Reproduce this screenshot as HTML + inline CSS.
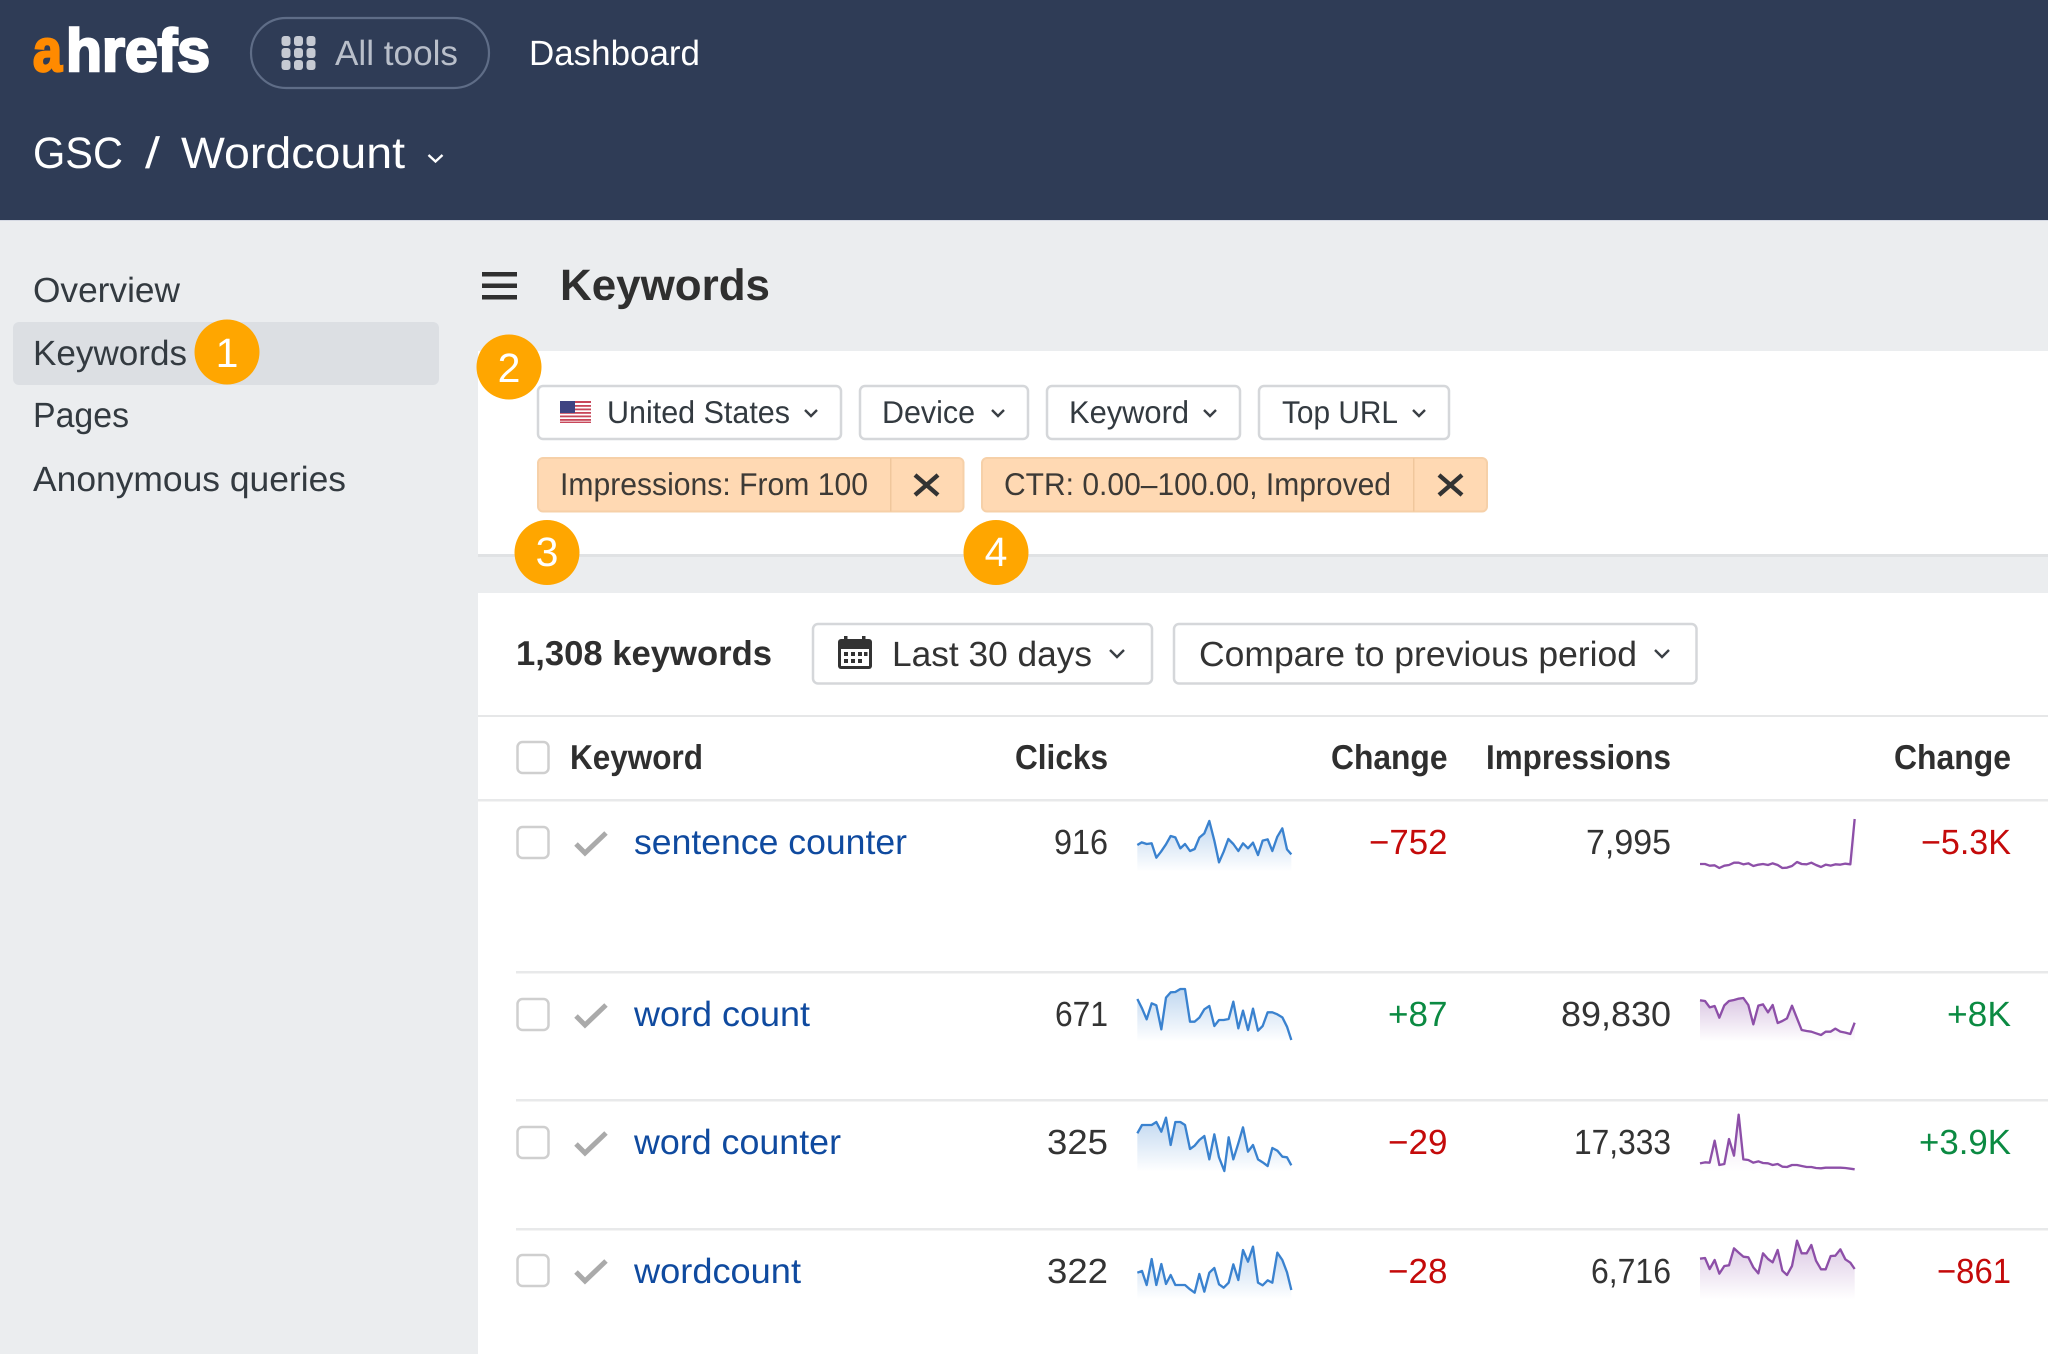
<!DOCTYPE html>
<html lang="en">
<head>
<meta charset="utf-8">
<title>Ahrefs GSC Keywords</title>
<style>
html,body{margin:0;padding:0;width:2048px;height:1354px;overflow:hidden;background:#ebedef}
svg{display:block}
text{font-family:"Liberation Sans",Arial,sans-serif;text-rendering:geometricPrecision;white-space:pre}
.s{font-size:35px;fill:#333a40}
.f{font-size:31.5px;fill:#333a40}
.p{font-size:31.5px;fill:#3d3a36}
.t{font-size:35px;fill:#333}
.b{font-size:34.5px;font-weight:700;fill:#2f2f2f}
.l{font-size:35px;fill:#0f4a9f}
.r{font-size:35px;fill:#c40a0a}
.g{font-size:35px;fill:#0b8a42}
.n{font-size:41px;fill:#fff;text-anchor:middle}
.chev{fill:none;stroke:#3a3f45;stroke-width:2.4}
.box{fill:#fff;stroke:#cfcfcf;stroke-width:2.5}
.tick{fill:none;stroke:#aaa;stroke-width:5}
.lnb{fill:none;stroke:#3a82cf;stroke-width:7;stroke-linejoin:round}
.lnp{fill:none;stroke:#8d4fa8;stroke-width:7;stroke-linejoin:round}
.btn{fill:#fff;stroke:#d5d7da;stroke-width:2.5}
</style>
</head>
<body>
<svg width="2048" height="1354" viewBox="0 0 2048 1354" xmlns="http://www.w3.org/2000/svg">
<defs>
<linearGradient id="gb" x1="0" y1="0" x2="0" y2="1"><stop offset="0" stop-color="#3a82cf" stop-opacity=".32"/><stop offset="1" stop-color="#3a82cf" stop-opacity="0"/></linearGradient>
<linearGradient id="gp" x1="0" y1="0" x2="0" y2="1"><stop offset="0" stop-color="#8d4fa8" stop-opacity=".32"/><stop offset="1" stop-color="#8d4fa8" stop-opacity="0"/></linearGradient>
</defs>

<!-- Header -->
<rect x="0" y="0" width="2048" height="220" fill="#2f3c56"/>
<rect x="0" y="220" width="2048" height="1" fill="#d5d9e3"/>
<text x="33" y="71" font-size="60" font-weight="700" fill="#ff8a00" stroke="#ff8a00" stroke-width="2.5" textLength="29" lengthAdjust="spacingAndGlyphs">a</text>
<text x="66" y="71" font-size="60" font-weight="700" fill="#fff" stroke="#fff" stroke-width="2.5" textLength="144" lengthAdjust="spacingAndGlyphs">hrefs</text>

<rect x="251" y="18" width="238" height="70" rx="35" fill="none" stroke="#5f6d87" stroke-width="2.2"/>
<g fill="#c6cad3">
<rect x="281.5" y="36" width="9" height="10" rx="3"/><rect x="294" y="36" width="9" height="10" rx="3"/><rect x="306.5" y="36" width="9" height="10" rx="3"/>
<rect x="281.5" y="48" width="9" height="10" rx="3"/><rect x="294" y="48" width="9" height="10" rx="3"/><rect x="306.5" y="48" width="9" height="10" rx="3"/>
<rect x="281.5" y="60" width="9" height="10" rx="3"/><rect x="294" y="60" width="9" height="10" rx="3"/><rect x="306.5" y="60" width="9" height="10" rx="3"/>
</g>
<text x="335" y="65" font-size="35" fill="#b9bfca" textLength="123" lengthAdjust="spacingAndGlyphs">All tools</text>
<text x="529" y="65" font-size="35" fill="#fff" textLength="171" lengthAdjust="spacingAndGlyphs">Dashboard</text>

<text x="33" y="168" font-size="44" fill="#fff" textLength="90" lengthAdjust="spacingAndGlyphs">GSC</text>
<text x="145" y="168" font-size="44" fill="#fff" textLength="15" lengthAdjust="spacingAndGlyphs">/</text>
<text x="181" y="168" font-size="44" fill="#fff" textLength="224" lengthAdjust="spacingAndGlyphs">Wordcount</text>
<polyline points="428.5,155 435.5,161.5 442.5,155" fill="none" stroke="#fff" stroke-width="2.4"/>

<!-- Sidebar -->
<rect x="13" y="322" width="426" height="63" rx="6" fill="#dcdfe3"/>
<text class="s" x="33" y="302" textLength="147" lengthAdjust="spacingAndGlyphs">Overview</text>
<text class="s" x="33" y="365" textLength="154" lengthAdjust="spacingAndGlyphs">Keywords</text>
<text class="s" x="33" y="427" textLength="96" lengthAdjust="spacingAndGlyphs">Pages</text>
<text class="s" x="33" y="491" textLength="313" lengthAdjust="spacingAndGlyphs">Anonymous queries</text>

<!-- Main title -->
<g fill="#2f2f2f">
<rect x="482" y="272" width="35" height="4.5"/><rect x="482" y="283.5" width="35" height="4.5"/><rect x="482" y="295" width="35" height="4.5"/>
</g>
<text x="560" y="300" font-size="44" font-weight="700" fill="#2f2f2f" textLength="210" lengthAdjust="spacingAndGlyphs">Keywords</text>

<!-- Filter panel -->
<rect x="478" y="351" width="1570" height="203" fill="#fff"/>
<rect x="478" y="554" width="1570" height="3" fill="#e0e2e4"/>

<rect class="btn" x="538" y="386" width="303" height="53" rx="5"/>
<rect class="btn" x="860" y="386" width="168" height="53" rx="5"/>
<rect class="btn" x="1047" y="386" width="193" height="53" rx="5"/>
<rect class="btn" x="1259" y="386" width="190" height="53" rx="5"/>

<!-- flag -->
<g>
<rect x="560" y="401" width="31" height="22" fill="#fff"/>
<g fill="#c8475a">
<rect x="560" y="401" width="31" height="2"/><rect x="560" y="405" width="31" height="1.8"/><rect x="560" y="408.5" width="31" height="1.8"/><rect x="560" y="412" width="31" height="1.8"/><rect x="560" y="415.5" width="31" height="1.8"/><rect x="560" y="419" width="31" height="1.8"/><rect x="560" y="421.6" width="31" height="1.4"/>
</g>
<rect x="560" y="401" width="15" height="12" fill="#3f4482"/>
</g>
<text class="f" x="607" y="423" textLength="183" lengthAdjust="spacingAndGlyphs">United States</text>
<polyline class="chev" points="805,410 811,416 817,410"/>
<text class="f" x="882" y="423" textLength="93" lengthAdjust="spacingAndGlyphs">Device</text>
<polyline class="chev" points="992,410 998,416 1004,410"/>
<text class="f" x="1069" y="423" textLength="120" lengthAdjust="spacingAndGlyphs">Keyword</text>
<polyline class="chev" points="1204,410 1210,416 1216,410"/>
<text class="f" x="1282" y="423" textLength="116" lengthAdjust="spacingAndGlyphs">Top URL</text>
<polyline class="chev" points="1413,410 1419,416 1425,410"/>

<!-- Pills -->
<rect x="538" y="458" width="425.5" height="53.5" rx="5" fill="#ffd9b3" stroke="#f6d0a8" stroke-width="2"/>
<rect x="890" y="458" width="1.5" height="53.5" fill="#f0c79c"/>
<text class="p" x="560" y="495" textLength="308" lengthAdjust="spacingAndGlyphs">Impressions: From 100</text>
<path d="M915 475L938 495M938 475L915 495" stroke="#333" stroke-width="4.4" fill="none"/>
<rect x="982" y="458" width="505" height="53.5" rx="5" fill="#ffd9b3" stroke="#f6d0a8" stroke-width="2"/>
<rect x="1413" y="458" width="1.5" height="53.5" fill="#f0c79c"/>
<text class="p" x="1004" y="495" textLength="387" lengthAdjust="spacingAndGlyphs">CTR: 0.00–100.00, Improved</text>
<path d="M1439 475L1462 495M1462 475L1439 495" stroke="#333" stroke-width="4.4" fill="none"/>

<!-- Table panel -->
<rect x="478" y="593" width="1570" height="761" fill="#fff"/>
<text class="b" x="516" y="665" textLength="256" lengthAdjust="spacingAndGlyphs">1,308 keywords</text>

<rect class="btn" x="813" y="624" width="339" height="59.5" rx="5"/>
<g>
<rect x="838" y="639" width="34" height="30" rx="3" fill="#333"/>
<rect x="844" y="636" width="3.5" height="6" fill="#333"/><rect x="862" y="636" width="3.5" height="6" fill="#333"/>
<rect x="841" y="649" width="28" height="17" fill="#fff"/>
<g fill="#333">
<rect x="844" y="652" width="4" height="4"/><rect x="851" y="652" width="4" height="4"/><rect x="858" y="652" width="4" height="4"/><rect x="864" y="652" width="3.5" height="4"/>
<rect x="844" y="659" width="4" height="4"/><rect x="851" y="659" width="4" height="4"/><rect x="858" y="659" width="4" height="4"/>
</g>
</g>
<text class="t" x="892" y="666" textLength="200" lengthAdjust="spacingAndGlyphs">Last 30 days</text>
<polyline class="chev" points="1110,650 1117,657 1124,650"/>

<rect class="btn" x="1174" y="624" width="522.5" height="59.5" rx="5"/>
<text class="t" x="1199" y="666" textLength="438" lengthAdjust="spacingAndGlyphs">Compare to previous period</text>
<polyline class="chev" points="1655,650 1662,657 1669,650"/>

<rect x="478" y="715" width="1570" height="2" fill="#e6e7e8"/>
<rect x="478" y="799" width="1570" height="2.5" fill="#e8e9ea"/>
<rect x="516" y="971" width="1532" height="2.5" fill="#e8e9ea"/>
<rect x="516" y="1099" width="1532" height="2.5" fill="#e8e9ea"/>
<rect x="516" y="1228" width="1532" height="2.5" fill="#e8e9ea"/>

<!-- Table header -->
<rect class="box" x="517.5" y="742" width="31" height="31" rx="5"/>
<text class="b" x="570" y="769" textLength="133" lengthAdjust="spacingAndGlyphs">Keyword</text>
<text class="b" x="1015" y="769" textLength="93" lengthAdjust="spacingAndGlyphs">Clicks</text>
<text class="b" x="1331" y="769" textLength="116.500" lengthAdjust="spacingAndGlyphs">Change</text>
<text class="b" x="1486" y="769" textLength="185" lengthAdjust="spacingAndGlyphs">Impressions</text>
<text class="b" x="1894" y="769" textLength="117" lengthAdjust="spacingAndGlyphs">Change</text>

<!-- Row 1 -->
<rect class="box" x="517.5" y="827" width="31" height="31" rx="5"/>
<polyline class="tick" points="576,844 585,853 606,833"/>
<text class="l" x="634" y="854" textLength="273" lengthAdjust="spacingAndGlyphs">sentence counter</text>
<text class="t" x="1054" y="854" textLength="54" lengthAdjust="spacingAndGlyphs">916</text>
<text class="r" x="1369" y="854" textLength="78.500" lengthAdjust="spacingAndGlyphs">−752</text>
<text class="t" x="1586" y="854" textLength="85" lengthAdjust="spacingAndGlyphs">7,995</text>
<text class="r" x="1921" y="854" textLength="90" lengthAdjust="spacingAndGlyphs">−5.3K</text>
<g transform="translate(1120,800) scale(.33333)">
<polygon fill="url(#gb)" points="52,135 65,127 80,132 95,130 109,173 123,155 138,133 152,108 166,112 181,145 195,132 210,153 224,147 238,113 253,100 268,63 283,122 297,187 311,155 325,117 340,132 355,153 369,130 384,145 399,128 414,165 428,122 443,118 457,153 472,110 487,85 501,148 514,163 514,215 52,215"/>
<polyline class="lnb" points="52,135 65,127 80,132 95,130 109,173 123,155 138,133 152,108 166,112 181,145 195,132 210,153 224,147 238,113 253,100 268,63 283,122 297,187 311,155 325,117 340,132 355,153 369,130 384,145 399,128 414,165 428,122 443,118 457,153 472,110 487,85 501,148 514,163"/>
</g>
<g transform="translate(1680,800) scale(.33333)">
<polygon fill="url(#gp)" opacity=".4" points="60,192 75,192 89,197 104,196 118,204 133,197 147,195 162,188 176,188 190,193 205,190 220,198 235,194 249,192 264,195 278,190 293,195 307,204 321,203 336,198 351,186 365,192 380,193 394,188 408,195 423,201 437,194 452,197 466,193 481,194 496,191 511,193 524,57 524,215 60,215"/>
<polyline class="lnp" points="60,192 75,192 89,197 104,196 118,204 133,197 147,195 162,188 176,188 190,193 205,190 220,198 235,194 249,192 264,195 278,190 293,195 307,204 321,203 336,198 351,186 365,192 380,193 394,188 408,195 423,201 437,194 452,197 466,193 481,194 496,191 511,193 524,57"/>
</g>

<!-- Row 2 -->
<rect class="box" x="517.5" y="999" width="31" height="31" rx="5"/>
<polyline class="tick" points="576,1016 585,1025 606,1005"/>
<text class="l" x="634" y="1026" textLength="176" lengthAdjust="spacingAndGlyphs">word count</text>
<text class="t" x="1055" y="1026" textLength="53" lengthAdjust="spacingAndGlyphs">671</text>
<text class="g" x="1388" y="1026" textLength="59.500" lengthAdjust="spacingAndGlyphs">+87</text>
<text class="t" x="1561" y="1026" textLength="110" lengthAdjust="spacingAndGlyphs">89,830</text>
<text class="g" x="1947" y="1026" textLength="64" lengthAdjust="spacingAndGlyphs">+8K</text>
<g transform="translate(1120,970) scale(.33333)">
<polygon fill="url(#gb)" points="52,87 66,115 80,148 95,100 109,106 124,178 138,83 152,67 166,66 181,57 195,57 210,155 224,155 238,143 253,118 268,108 283,168 297,150 311,150 326,147 340,95 355,175 369,122 384,180 399,116 414,182 428,168 443,127 457,127 472,133 487,142 501,170 514,210 514,215 52,215"/>
<polyline class="lnb" points="52,87 66,115 80,148 95,100 109,106 124,178 138,83 152,67 166,66 181,57 195,57 210,155 224,155 238,143 253,118 268,108 283,168 297,150 311,150 326,147 340,95 355,175 369,122 384,180 399,116 414,182 428,168 443,127 457,127 472,133 487,142 501,170 514,210"/>
</g>
<g transform="translate(1680,970) scale(.33333)">
<polygon fill="url(#gp)" points="60,91 75,93 89,112 104,108 118,143 133,106 147,93 162,90 176,86 190,84 205,105 220,163 235,107 249,103 264,127 278,105 293,159 307,153 321,145 336,107 351,145 365,180 380,183 394,185 408,190 423,195 437,185 452,185 466,176 481,185 496,188 511,192 524,158 524,215 60,215"/>
<polyline class="lnp" points="60,91 75,93 89,112 104,108 118,143 133,106 147,93 162,90 176,86 190,84 205,105 220,163 235,107 249,103 264,127 278,105 293,159 307,153 321,145 336,107 351,145 365,180 380,183 394,185 408,190 423,195 437,185 452,185 466,176 481,185 496,188 511,192 524,158"/>
</g>

<!-- Row 3 -->
<rect class="box" x="517.5" y="1127" width="31" height="31" rx="5"/>
<polyline class="tick" points="576,1144 585,1153 606,1133"/>
<text class="l" x="634" y="1154" textLength="207" lengthAdjust="spacingAndGlyphs">word counter</text>
<text class="t" x="1047" y="1154" textLength="61" lengthAdjust="spacingAndGlyphs">325</text>
<text class="r" x="1388" y="1154" textLength="59.500" lengthAdjust="spacingAndGlyphs">−29</text>
<text class="t" x="1574" y="1154" textLength="97" lengthAdjust="spacingAndGlyphs">17,333</text>
<text class="g" x="1919" y="1154" textLength="92" lengthAdjust="spacingAndGlyphs">+3.9K</text>
<g transform="translate(1120,1100) scale(.33333)">
<polygon fill="url(#gb)" points="52,100 66,75 80,75 95,75 109,66 124,95 138,53 152,135 166,66 181,66 195,75 210,147 224,137 238,120 253,108 268,178 283,103 297,172 313,213 326,112 340,178 355,130 369,82 384,155 399,135 414,178 428,187 443,198 457,144 472,152 487,170 501,172 514,196 514,215 52,215"/>
<polyline class="lnb" points="52,100 66,75 80,75 95,75 109,66 124,95 138,53 152,135 166,66 181,66 195,75 210,147 224,137 238,120 253,108 268,178 283,103 297,172 313,213 326,112 340,178 355,130 369,82 384,155 399,135 414,178 428,187 443,198 457,144 472,152 487,170 501,172 514,196"/>
</g>
<g transform="translate(1680,1100) scale(.33333)">
<polygon fill="url(#gp)" opacity=".6" points="60,190 75,187 89,188 104,122 118,195 133,192 147,117 162,167 176,44 190,178 205,180 220,188 235,184 249,189 264,190 278,195 293,192 307,200 321,201 336,195 351,195 365,198 380,201 394,201 408,204 423,205 437,203 452,203 466,203 481,203 496,204 511,206 524,208 524,215 60,215"/>
<polyline class="lnp" points="60,190 75,187 89,188 104,122 118,195 133,192 147,117 162,167 176,44 190,178 205,180 220,188 235,184 249,189 264,190 278,195 293,192 307,200 321,201 336,195 351,195 365,198 380,201 394,201 408,204 423,205 437,203 452,203 466,203 481,203 496,204 511,206 524,208"/>
</g>

<!-- Row 4 -->
<rect class="box" x="517.5" y="1255" width="31" height="31" rx="5"/>
<polyline class="tick" points="576,1272 585,1281 606,1261"/>
<text class="l" x="634" y="1283" textLength="167" lengthAdjust="spacingAndGlyphs">wordcount</text>
<text class="t" x="1047" y="1283" textLength="61" lengthAdjust="spacingAndGlyphs">322</text>
<text class="r" x="1388" y="1283" textLength="59.500" lengthAdjust="spacingAndGlyphs">−28</text>
<text class="t" x="1591" y="1283" textLength="80" lengthAdjust="spacingAndGlyphs">6,716</text>
<text class="r" x="1937" y="1283" textLength="74" lengthAdjust="spacingAndGlyphs">−861</text>
<g transform="translate(1120,1230) scale(.33333)">
<polygon fill="url(#gb)" points="52,128 66,123 80,165 95,87 109,165 124,102 138,162 152,135 166,165 181,165 195,165 210,178 224,188 238,132 253,185 268,128 283,114 297,163 311,173 326,158 340,103 355,150 369,60 384,95 399,50 414,158 428,166 443,151 457,158 472,68 487,90 501,127 514,180 514,208 52,208"/>
<polyline class="lnb" points="52,128 66,123 80,165 95,87 109,165 124,102 138,162 152,135 166,165 181,165 195,165 210,178 224,188 238,132 253,185 268,128 283,114 297,163 311,173 326,158 340,103 355,150 369,60 384,95 399,50 414,158 428,166 443,151 457,158 472,68 487,90 501,127 514,180"/>
</g>
<g transform="translate(1680,1230) scale(.33333)">
<polygon fill="url(#gp)" points="60,86 75,84 89,117 104,90 118,131 133,108 147,106 162,55 176,68 190,80 205,82 220,112 235,130 249,70 264,87 278,97 293,60 307,122 321,135 336,108 351,32 365,70 380,70 394,45 408,92 423,118 437,118 452,78 466,77 481,58 496,88 511,98 524,117 524,208 60,208"/>
<polyline class="lnp" points="60,86 75,84 89,117 104,90 118,131 133,108 147,106 162,55 176,68 190,80 205,82 220,112 235,130 249,70 264,87 278,97 293,60 307,122 321,135 336,108 351,32 365,70 380,70 394,45 408,92 423,118 437,118 452,78 466,77 481,58 496,88 511,98 524,117"/>
</g>

<!-- Number badges -->
<circle cx="227" cy="352" r="32.5" fill="#ffa600"/>
<text class="n" x="227" y="367">1</text>
<circle cx="509" cy="367" r="32.5" fill="#ffa600"/>
<text class="n" x="509" y="382">2</text>
<circle cx="547" cy="552.500" r="32.5" fill="#ffa600"/>
<text class="n" x="547" y="566">3</text>
<circle cx="996" cy="552.500" r="32.5" fill="#ffa600"/>
<text class="n" x="996" y="566">4</text>
</svg>
</body>
</html>
